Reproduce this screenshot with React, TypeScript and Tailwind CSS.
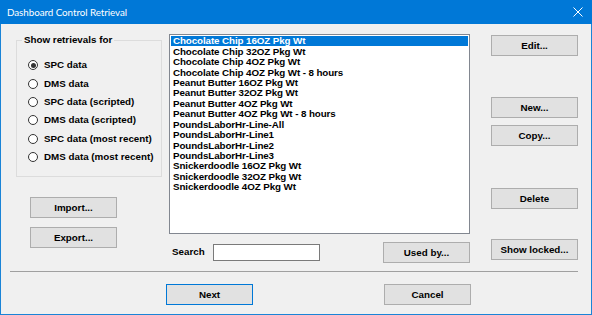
import { useState } from 'react';

const font = { fontFamily: '"Liberation Sans", Arial, sans-serif' };

const items = [
  'Chocolate Chip 16OZ Pkg Wt',
  'Chocolate Chip 32OZ Pkg Wt',
  'Chocolate Chip 4OZ Pkg Wt',
  'Chocolate Chip 4OZ Pkg Wt - 8 hours',
  'Peanut Butter 16OZ Pkg Wt',
  'Peanut Butter 32OZ Pkg Wt',
  'Peanut Butter 4OZ Pkg Wt',
  'Peanut Butter 4OZ Pkg Wt - 8 hours',
  'PoundsLaborHr-Line-All',
  'PoundsLaborHr-Line1',
  'PoundsLaborHr-Line2',
  'PoundsLaborHr-Line3',
  'Snickerdoodle 16OZ Pkg Wt',
  'Snickerdoodle 32OZ Pkg Wt',
  'Snickerdoodle 4OZ Pkg Wt',
];

const options = [
  'SPC data',
  'DMS data',
  'SPC data (scripted)',
  'DMS data (scripted)',
  'SPC data (most recent)',
  'DMS data (most recent)',
];

function Btn({ label, primary, className = '' }: { label: string; primary?: boolean; className?: string }) {
  return (
    <button
      className={`w-[87px] h-[21px] flex items-center justify-center bg-[#e1e1e1] border text-[9.8px] font-bold text-black leading-none ${
        primary ? 'border-[#0078d7]' : 'border-[#adadad]'
      } ${className}`}
    >
      {label}
    </button>
  );
}

export default function App() {
  const [choice, setChoice] = useState(0);
  const [selected, setSelected] = useState(0);

  return (
    <div className="w-[592px] h-[315px] flex flex-col bg-[#f0f0f0] text-black" style={font}>
      <div className="h-[24px] shrink-0 bg-[#0078d7] flex items-center justify-between pl-[7px] pr-[8px]">
        <span className="text-white text-[9.8px] tracking-[-0.05px]" style={{ fontFamily: 'Lato, "Noto Sans", sans-serif' }}>
          Dashboard Control Retrieval
        </span>
        <svg width="10" height="10" viewBox="0 0 10 10" className="mr-[1px]">
          <path d="M0.5 0.5 L9.5 9.5 M9.5 0.5 L0.5 9.5" stroke="white" strokeWidth="1" />
        </svg>
      </div>

      <div className="flex-1 flex flex-col border-x border-b border-[#1a84d7]">
        <div className="h-[247px] shrink-0 flex pt-[10px] pl-[15px]">
          {/* left column */}
          <div className="w-[146px] flex flex-col">
            <fieldset className="h-[143px] border border-[#dcdcdc] m-0 p-0">
              <legend className="ml-[5px] px-[2px] text-[9.8px] font-bold leading-[12px]">Show retrievals for</legend>
              <div className="flex flex-col pt-[10px] pl-[11px]">
                {options.map((o, i) => (
                  <div
                    key={o}
                    className="h-[18.4px] flex items-center gap-[6px] cursor-default"
                    onClick={() => setChoice(i)}
                  >
                    <span className="w-[10px] h-[10px] rounded-full border border-[#333333] bg-white flex items-center justify-center">
                      {choice === i && <span className="w-[5px] h-[5px] rounded-full bg-[#333333]" />}
                    </span>
                    <span className="text-[9.8px] font-bold leading-none">{o}</span>
                  </div>
                ))}
              </div>
            </fieldset>
            <Btn label="Import..." className="ml-[14px] mt-[20px]" />
            <Btn label="Export..." className="ml-[14px] mt-[9px]" />
          </div>

          {/* middle column */}
          <div className="w-[301px] ml-[7px] flex flex-col">
            <div className="h-[200px] border border-[#828790] bg-white p-[1px]">
              {items.map((it, i) => (
                <div
                  key={it}
                  onClick={() => setSelected(i)}
                  className={`h-[10.43px] pl-[2px] flex items-center text-[9.8px] font-bold leading-none whitespace-nowrap tracking-[-0.1px] ${
                    selected === i ? 'bg-[#0078d7] text-white' : 'text-black'
                  }`}
                >
                  {it}
                </div>
              ))}
            </div>
            <div className="flex items-center mt-[8px]">
              <span className="w-[44px] pl-[3px] text-[9.8px] font-bold">Search</span>
              <input className="w-[107px] h-[17px] border border-[#7a7a7a] bg-white outline-none" />
              <Btn label="Used by..." className="ml-auto" />
            </div>
          </div>

          {/* right column */}
          <div className="w-[87px] ml-[21px] flex flex-col">
            <Btn label="Edit..." className="mt-[1px]" />
            <Btn label="New..." className="mt-[41px]" />
            <Btn label="Copy..." className="mt-[7px]" />
            <Btn label="Delete" className="mt-[42px]" />
            <Btn label="Show locked..." className="mt-[30px]" />
          </div>
        </div>

        <div className="ml-[9px] w-[568px] border-t border-[#a0a0a0]" />

        <div className="flex mt-[12px] ml-[165px]">
          <Btn label="Next" primary className="h-[20px]" />
          <Btn label="Cancel" className="h-[20px] ml-[131px]" />
        </div>
      </div>
    </div>
  );
}
